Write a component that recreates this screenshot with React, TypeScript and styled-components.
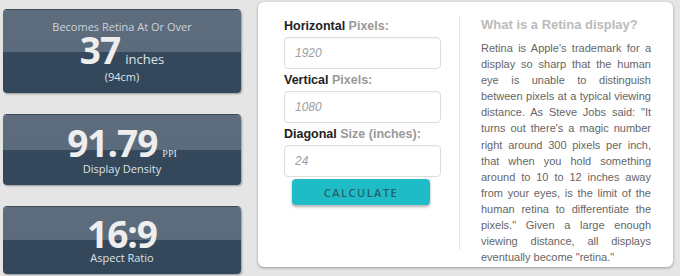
import React from "react";
import styled, { createGlobalStyle } from "styled-components";

const GlobalStyle = createGlobalStyle`
  html, body {
    margin: 0;
    padding: 0;
    background: #e5e5e5;
  }
  body {
    font-family: "Liberation Sans", Arial, sans-serif;
  }
`;

interface Stat {
  label?: string;
  value: string;
  unit?: string;
  unitSerif?: boolean;
  caption: string;
  padTop: number;
  captionGap: number;
}

const stats: Stat[] = [
  {
    label: "Becomes Retina At Or Over",
    value: "37",
    unit: "inches",
    caption: "(94cm)",
    padTop: 10,
    captionGap: 5,
  },
  {
    value: "91.79",
    unit: "PPI",
    unitSerif: true,
    caption: "Display Density",
    padTop: 12,
    captionGap: 4,
  },
  {
    value: "16:9",
    caption: "Aspect Ratio",
    padTop: 11,
    captionGap: 2,
  },
];

const fields = [
  { strong: "Horizontal", rest: "Pixels:", placeholder: "1920" },
  { strong: "Vertical", rest: "Pixels:", placeholder: "1080" },
  { strong: "Diagonal", rest: "Size (inches):", placeholder: "24" },
];

const App: React.FunctionComponent = () => {
  return (
    <Page>
      <GlobalStyle />
      <StatColumn>
        {stats.map((stat) => (
          <StatCard key={stat.caption} $padTop={stat.padTop}>
            {stat.label && <StatLabel>{stat.label}</StatLabel>}
            <ValueRow>
              <Value>{stat.value}</Value>
              {stat.unit && <Unit $serif={stat.unitSerif}>{stat.unit}</Unit>}
            </ValueRow>
            <Caption $gap={stat.captionGap}>{stat.caption}</Caption>
          </StatCard>
        ))}
      </StatColumn>
      <Panel>
        <Form>
          {fields.map((field, i) => (
            <Field key={field.strong} $first={i === 0}>
              <Label>
                <Strong>{field.strong}</Strong> {field.rest}
              </Label>
              <Input placeholder={field.placeholder} />
            </Field>
          ))}
          <Button>CALCULATE</Button>
        </Form>
        <Divider />
        <Info>
          <InfoTitle>What is a Retina display?</InfoTitle>
          <InfoText>
            Retina is Apple's trademark for a display so sharp that the human
            eye is unable to distinguish between pixels at a typical viewing
            distance. As Steve Jobs said: "It turns out there's a magic number
            right around 300 pixels per inch, that when you hold something
            around to 10 to 12 inches away from your eyes, is the limit of the
            human retina to differentiate the pixels." Given a large enough
            viewing distance, all displays eventually become "retina."
          </InfoText>
        </Info>
      </Panel>
    </Page>
  );
};

const Page = styled.div`
  display: flex;
  align-items: flex-start;
  padding-left: 3px;
  height: 276px;
  overflow: hidden;
`;

const StatColumn = styled.div`
  display: flex;
  flex-direction: column;
  gap: 22px;
  width: 238px;
  margin-top: 10px;
`;

const StatCard = styled.div<{ $padTop: number }>`
  display: flex;
  flex-direction: column;
  align-items: center;
  padding: ${(p) => p.$padTop}px 0 9px;
  background: linear-gradient(to bottom, #5e6d7d 0%, #5c6b7b 50%, #36495c 50%, #33475a 100%);
  border-radius: 4px;
  box-shadow: 0 -1px 0 #3c4955, 1px 1px 2px rgba(0, 0, 0, 0.35);
  font-family: "Open Sans", "Liberation Sans", sans-serif;
`;

const StatLabel = styled.div`
  font-size: 11px;
  line-height: 14px;
  color: #ccd3da;
`;

const ValueRow = styled.div`
  display: flex;
  align-items: baseline;
  gap: 5px;
  height: 31px;
  line-height: 31px;
`;

const Value = styled.span`
  font-size: 37px;
  font-weight: 700;
  color: #eeeeee;
  letter-spacing: -1px;
`;

const Unit = styled.span<{ $serif?: boolean }>`
  font-family: ${(p) =>
    p.$serif ? `"Liberation Serif", serif` : `"Open Sans", sans-serif`};
  font-size: ${(p) => (p.$serif ? "10px" : "13px")};
  line-height: 1;
  color: #dfe4e8;
`;

const Caption = styled.div<{ $gap: number }>`
  margin-top: ${(p) => p.$gap}px;
  font-size: 11px;
  line-height: 14px;
  color: #dde2e7;
`;

const Panel = styled.div`
  display: flex;
  align-items: stretch;
  width: 415px;
  height: 265px;
  margin: 2px 0 0 17px;
  box-sizing: border-box;
  padding: 0 22px 0 26px;
  background: #ffffff;
  border-radius: 6px;
  box-shadow: 0 1px 3px rgba(0, 0, 0, 0.35);
`;

const Form = styled.div`
  display: flex;
  flex-direction: column;
  width: 157px;
  padding-top: 16px;
`;

const Field = styled.div<{ $first: boolean }>`
  display: flex;
  flex-direction: column;
  gap: 3px;
  margin-top: ${(p) => (p.$first ? 0 : 3)}px;
`;

const Label = styled.label`
  font-size: 12.5px;
  line-height: 16px;
  font-weight: 700;
  color: #999999;
`;

const Strong = styled.span`
  color: #222222;
`;

const Input = styled.input`
  box-sizing: border-box;
  width: 157px;
  height: 32px;
  padding: 0 10px;
  border: 1px solid #dddddd;
  border-radius: 4px;
  box-shadow: inset 0 1px 1px rgba(0, 0, 0, 0.04);
  font-family: "Liberation Sans", Arial, sans-serif;
  font-size: 12px;
  outline: none;

  &::placeholder {
    color: #a0a0a0;
    font-style: italic;
  }
`;

const Button = styled.button`
  width: 138px;
  height: 26px;
  margin: 2px 0 0 8px;
  padding: 0;
  border: none;
  border-radius: 4px;
  background: #1fbcc7;
  box-shadow: 0 2px 3px rgba(0, 0, 0, 0.3);
  color: #22636a;
  font-family: "Open Sans", sans-serif;
  font-size: 11px;
  font-weight: 600;
  letter-spacing: 1.5px;
  cursor: pointer;
`;

const Divider = styled.div`
  width: 1px;
  margin: 13px 21px 17px 18px;
  background: #e6e6e6;
`;

const Info = styled.div`
  width: 170px;
  padding-top: 14px;
`;

const InfoTitle = styled.div`
  font-size: 13px;
  line-height: 18px;
  font-weight: 700;
  color: #bbbbbb;
`;

const InfoText = styled.p`
  margin: 6px 0 0;
  font-size: 11px;
  line-height: 16.1px;
  color: #666666;
  text-align: justify;
`;

export default App;
